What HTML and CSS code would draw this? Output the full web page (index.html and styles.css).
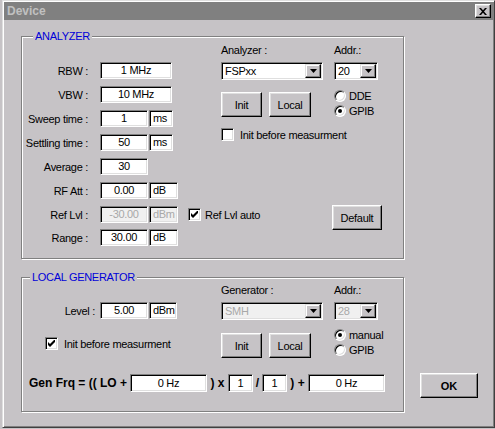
FILE: index.html
```html
<!DOCTYPE html>
<html>
<head>
<meta charset="utf-8">
<title>Device</title>
<link rel="stylesheet" href="styles.css">
</head>
<body>
<div class="window">
  <div class="titlebar">
    <span class="title">Device</span>
    <span class="close-btn"><svg width="8" height="7" viewBox="0 0 8 7"><path d="M0 0h2l2 2.3L6 0h2L5 3.5 8 7H6L4 4.7 2 7H0l3-3.5z" fill="#000"/></svg></span>
  </div>
  <div class="client">
    <div class="groups">
      <div class="group group-analyzer">
        <span class="group-label label-analyzer">ANALYZER</span>
        <div class="an-top">
          <div class="form">
            <div class="frow"><span class="lbl">RBW :</span><span class="field w72">1 MHz</span></div>
            <div class="frow"><span class="lbl">VBW :</span><span class="field w72">10 MHz</span></div>
            <div class="frow"><span class="lbl">Sweep time :</span><span class="field w48">1</span><span class="field unit u25">ms</span></div>
            <div class="frow"><span class="lbl">Settling time :</span><span class="field w48">50</span><span class="field unit u25">ms</span></div>
            <div class="frow"><span class="lbl">Average :</span><span class="field w48">30</span></div>
            <div class="frow"><span class="lbl">RF Att :</span><span class="field w48">0.00</span><span class="field unit u30">dB</span></div>
          </div>
          <div class="inst inst-analyzer">
            <span class="cap">Analyzer :</span>
            <span class="cap">Addr.:</span>
            <div class="combo w-combo"><span class="combo-text">FSPxx</span><span class="drop"><svg width="7" height="4" viewBox="0 0 7 4"><path d="M0 0h7L3.5 4z" fill="#000"/></svg></span></div>
            <div class="combo w-addr"><span class="combo-text">20</span><span class="drop"><svg width="7" height="4" viewBox="0 0 7 4"><path d="M0 0h7L3.5 4z" fill="#000"/></svg></span></div>
            <div class="btns"><span class="btn b-init">Init</span><span class="btn b-local">Local</span></div>
            <div class="radios">
              <div class="radio"><span class="rcircle"></span><span class="rtext">DDE</span></div>
              <div class="radio"><span class="rcircle on"></span><span class="rtext">GPIB</span></div>
            </div>
            <div class="check span2"><span class="cbox"></span><span class="ctext">Init before measurment</span></div>
          </div>
        </div>
        <div class="frow row-ref"><span class="lbl">Ref Lvl :</span><span class="field w48 disabled">-30.00</span><span class="field unit u30 disabled">dBm</span>
          <div class="check check-ref"><span class="cbox"><svg width="7" height="7" viewBox="0 0 7 7"><path d="M0 2l2 2 5-5v3L2 7 0 5z" fill="#000"/></svg></span><span class="ctext">Ref Lvl auto</span></div>
          <span class="btn b-default">Default</span>
        </div>
        <div class="frow row-range"><span class="lbl">Range :</span><span class="field w48">30.00</span><span class="field unit u30">dB</span></div>
      </div>

      <div class="group group-local">
        <span class="group-label label-local">LOCAL GENERATOR</span>
        <div class="lg-top">
          <div class="lg-left">
            <div class="frow"><span class="lbl lbl-level">Level :</span><span class="field w48">5.00</span><span class="field unit u29">dBm</span></div>
            <div class="check check-lg"><span class="cbox"><svg width="7" height="7" viewBox="0 0 7 7"><path d="M0 2l2 2 5-5v3L2 7 0 5z" fill="#000"/></svg></span><span class="ctext">Init before measurment</span></div>
          </div>
          <div class="inst inst-local">
            <span class="cap">Generator :</span>
            <span class="cap">Addr.:</span>
            <div class="combo w-combo disabled"><span class="combo-text">SMH</span><span class="drop"><svg width="7" height="4" viewBox="0 0 7 4"><path d="M0 0h7L3.5 4z" fill="#000"/></svg></span></div>
            <div class="combo w-addr disabled"><span class="combo-text">28</span><span class="drop"><svg width="7" height="4" viewBox="0 0 7 4"><path d="M0 0h7L3.5 4z" fill="#000"/></svg></span></div>
            <div class="btns"><span class="btn b-init">Init</span><span class="btn b-local">Local</span></div>
            <div class="radios">
              <div class="radio"><span class="rcircle on"></span><span class="rtext">manual</span></div>
              <div class="radio"><span class="rcircle"></span><span class="rtext">GPIB</span></div>
            </div>
          </div>
        </div>
        <div class="genfrq">
          <span class="gf-lbl">Gen Frq = (( LO +</span>
          <span class="field gf-wide">0 Hz</span>
          <span class="gf-op">) x</span>
          <span class="field gf-small">1</span>
          <span class="gf-slash">/</span>
          <span class="field gf-small">1</span>
          <span class="gf-op">) +</span>
          <span class="field gf-wide">0 Hz</span>
        </div>
      </div>
    </div>
    <div class="side">
      <span class="btn b-ok">OK</span>
    </div>
  </div>
</div>
</body>
</html>
```

FILE: styles.css
```css
html, body {
  margin: 0;
  padding: 0;
}
body {
  width: 495px;
  height: 429px;
  overflow: hidden;
  background: #c6c3c6;
  font-family: "Liberation Sans", Arial, sans-serif;
  font-size: 11px;
  letter-spacing: -0.3px;
  color: #000;
}

.window {
  box-sizing: border-box;
  margin-left: 2px;
  width: 493px;
  height: 428px;
  border: 1px solid;
  border-color: #dfdfdf #404040 #404040 #dfdfdf;
  padding: 1px;
  box-shadow: inset 1px 1px #fff, inset -1px -1px #808080;
  background: #c6c3c6;
  display: flex;
  flex-direction: column;
}

.titlebar {
  height: 18px;
  flex: none;
  background: #808080;
  display: flex;
  align-items: center;
  justify-content: space-between;
  padding: 0 2px 0 3px;
  color: #c0c0c0;
  font-weight: bold;
  font-size: 12px;
  letter-spacing: 0;
}

.close-btn {
  box-sizing: border-box;
  width: 16px;
  height: 14px;
  border: 1px solid;
  border-color: #fff #000 #000 #fff;
  box-shadow: inset -1px -1px #808080, inset 1px 1px #dfdfdf;
  background: #c6c3c6;
  display: flex;
  align-items: center;
  justify-content: center;
}
.close-btn svg { display: block; }

.client {
  flex: 1;
  display: flex;
}

.groups {
  padding: 16px 0 0 17px;
  display: flex;
  flex-direction: column;
}

.group {
  position: relative;
  box-sizing: border-box;
  width: 383px;
  border: 1px solid #808080;
  box-shadow: 1px 1px #fff, inset 1px 1px #fff;
}
.group-analyzer { height: 223px; }
.group-local { height: 135px; margin-top: 18px; }

.group-label {
  position: absolute;
  top: -7px;
  padding: 0 2px;
  background: #c6c3c6;
  color: #0000d8;
  line-height: 13px;
  white-space: nowrap;
}
.label-analyzer { left: 11px; }
.label-local { left: 8px; }

/* form rows */
.an-top {
  display: flex;
  padding-top: 7px;
}
.form {
  width: 199px;
  flex: none;
  padding-top: 18px;
  display: flex;
  flex-direction: column;
  gap: 7px;
}
.frow {
  display: flex;
  align-items: center;
  height: 17px;
}
.lbl {
  width: 66px;
  margin-right: 12px;
  text-align: right;
  white-space: nowrap;
  flex: none;
}

.field {
  box-sizing: border-box;
  height: 17px;
  flex: none;
  background: #fff;
  border: 1px solid;
  border-color: #808080 #fff #fff #808080;
  box-shadow: inset 1px 1px #000, inset -1px -1px #dfdfdf;
  text-align: center;
  line-height: 15px;
  white-space: nowrap;
  overflow: hidden;
}
.field.unit {
  text-align: left;
  padding-left: 3px;
  margin-left: 1px;
}
.field.disabled {
  background: #f0f0f0;
  color: #a8a8a8;
}
.w72 { width: 72px; }
.w48 { width: 48px; }
.u25 { width: 24px; }
.u30 { width: 29px; }
.u29 { width: 28px; }

.row-ref { margin-top: 7px; padding-right: 21px; }
.row-range { margin-top: 6px; }

/* instrument panel */
.inst {
  display: grid;
  grid-template-columns: 102px 44px;
  column-gap: 11px;
  align-content: start;
  align-items: start;
}
.cap {
  line-height: 13px;
  white-space: nowrap;
}

.combo {
  box-sizing: border-box;
  height: 18px;
  margin-top: 5px;
  padding: 1px;
  background: #fff;
  border: 1px solid;
  border-color: #808080 #fff #fff #808080;
  box-shadow: inset 1px 1px #000, inset -1px -1px #dfdfdf;
  display: flex;
}
.combo.disabled { background: #f0f0f0; color: #a8a8a8; }
.combo-text {
  flex: 1;
  padding-left: 2px;
  line-height: 14px;
}
.drop {
  box-sizing: border-box;
  width: 16px;
  height: 14px;
  border: 1px solid;
  border-color: #dfdfdf #000 #000 #dfdfdf;
  box-shadow: inset -1px -1px #808080, inset 1px 1px #fff;
  background: #c6c3c6;
  display: flex;
  align-items: center;
  justify-content: center;
}
.drop svg { display: block; }

.btns {
  display: flex;
  gap: 7px;
}
.inst-analyzer .btns { margin-top: 12px; }
.inst-local .btns { margin-top: 13px; }

.btn {
  box-sizing: border-box;
  height: 25px;
  border: 1px solid;
  border-color: #fff #000 #000 #fff;
  box-shadow: inset -1px -1px #808080, inset 1px 1px #dfdfdf;
  background: #c6c3c6;
  display: flex;
  align-items: center;
  justify-content: center;
  white-space: nowrap;
  flex: none;
}
.b-init { width: 41px; }
.b-local { width: 42px; }
.b-default {
  width: 50px;
  margin-left: auto;
  align-self: flex-start;
  margin-top: -1px;
}
.b-ok {
  width: 58px;
  font-weight: bold;
  letter-spacing: 0;
}

.radios {
  display: flex;
  flex-direction: column;
}
.inst-analyzer .radios { margin-top: 8px; }
.inst-local .radios { margin-top: 7px; }
.radio {
  display: flex;
  align-items: center;
  height: 15px;
}
.rcircle {
  box-sizing: border-box;
  width: 12px;
  height: 12px;
  border-radius: 50%;
  border: 1px solid;
  border-color: #808080 #fff #fff #808080;
  box-shadow: inset 1px 1px #000, inset -1px -1px #dfdfdf;
  background: #fff;
  display: flex;
  align-items: center;
  justify-content: center;
  flex: none;
}
.rcircle.on::after {
  content: "";
  width: 4px;
  height: 4px;
  border-radius: 50%;
  background: #000;
}
.rtext { margin-left: 3px; }

.check {
  display: flex;
  align-items: center;
}
.span2 {
  grid-column: 1 / -1;
  margin-top: 10px;
}
.cbox {
  box-sizing: border-box;
  width: 13px;
  height: 13px;
  flex: none;
  background: #fff;
  border: 1px solid;
  border-color: #808080 #fff #fff #808080;
  box-shadow: inset 1px 1px #000, inset -1px -1px #dfdfdf;
  display: flex;
  align-items: center;
  justify-content: center;
}
.cbox svg { display: block; }
.ctext { margin-left: 6px; white-space: nowrap; }
.check-ref { margin-left: 10px; }
.check-ref .ctext { margin-left: 4px; }

/* local generator */
.lg-top {
  display: flex;
  padding-top: 6px;
}
.lg-left {
  width: 199px;
  flex: none;
  padding-top: 18px;
}
.lbl-level {
  width: 73px;
  margin-right: 5px;
}
.check-lg {
  margin-top: 18px;
  padding-left: 23px;
}

.genfrq {
  display: flex;
  align-items: center;
  margin-top: 16px;
  padding-left: 7px;
}
.gf-lbl, .gf-op, .gf-slash {
  font-weight: bold;
  font-size: 12px;
  letter-spacing: 0;
  white-space: nowrap;
  flex: none;
}
.gf-lbl { width: 101px; }
.gf-op { width: 21px; text-align: center; }
.gf-slash { width: 9px; text-align: center; }
.genfrq .field { height: 18px; line-height: 16px; }
.gf-wide { width: 77px; }
.gf-small { width: 25px; }

.side {
  flex: 1;
  padding: 353px 0 0 16px;
}
```
